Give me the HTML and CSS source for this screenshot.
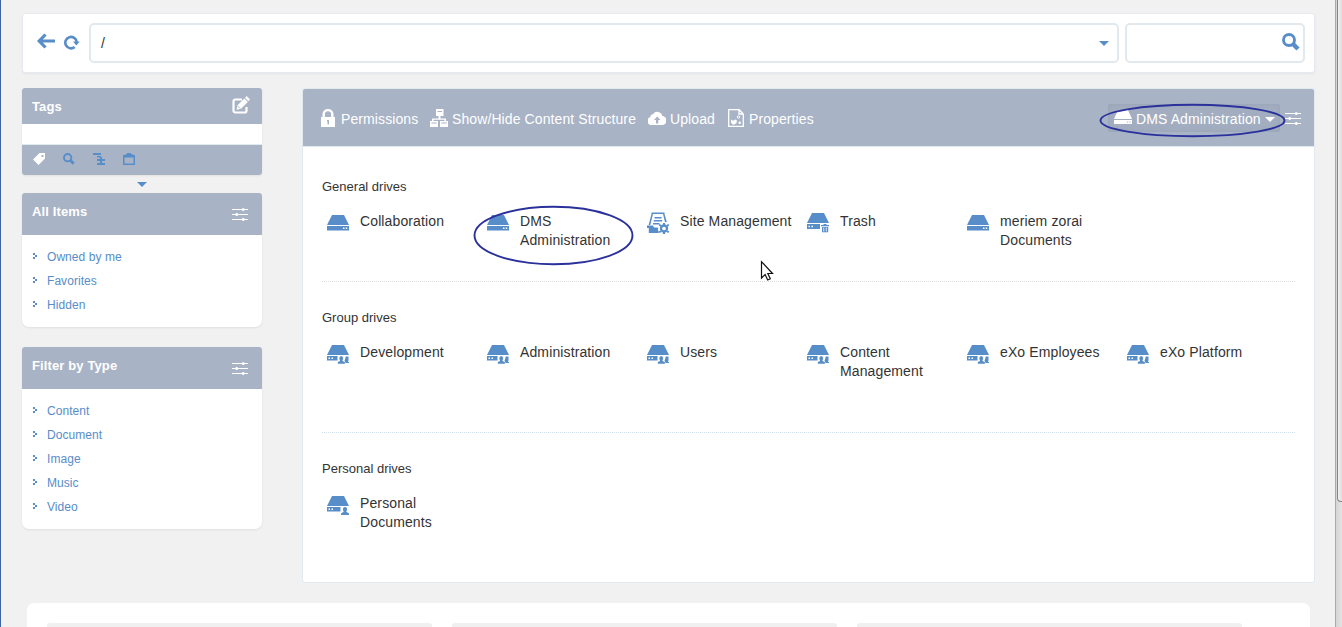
FILE: index.html
```html
<!DOCTYPE html>
<html lang="en">
<head>
<meta charset="utf-8">
<title>Drives</title>
<link rel="stylesheet" href="styles.css">
</head>
<body>
<svg class="defs" width="0" height="0">
  <defs>
    <symbol id="drive" viewBox="0 0 22 22"><path d="M5 3h12l5 10H0z"/><path fill-rule="evenodd" d="M0 14h22v4.500H0zM16 15.500v1.500h1.500v-1.500zM18.700 15.500v1.500h1.500v-1.500z"/></symbol>
    <symbol id="person" viewBox="0 0 8 8"><path d="M2 2.200C2 .7 2.700 0 4 0s2 .7 2 2.200c0 1.400-.6 2.100-.8 2.800 1 .6 2.800.5 2.800 2.100V8H0v-.9C0 5.500 1.800 5.600 2.800 5 2.600 4.300 2 3.600 2 2.200z"/></symbol>
    <symbol id="group" viewBox="0 0 22 22"><path d="M5 2h12l5 10H0z"/><path fill-rule="evenodd" d="M0 13h10.500v4.500H0zM1.500 14.500V16H3v-1.500zM4.500 14.500V16H6v-1.500z"/><use href="#person" x="10.500" y="13" width="7.500" height="8"/><path d="M18.800 13.500h2.700v3.500l-.5 1.500 1 .7V20h-3.500c0-1.100-.6-1.500-1.200-2 1.300-.8.800-3.500 1.500-4.500z"/></symbol>
    <symbol id="personal" viewBox="0 0 22 22"><path d="M5 2h12l5 10H0z"/><path fill-rule="evenodd" d="M0 13h13.500v4.500H0zM1.500 14.500V16H3v-1.500zM4.500 14.500V16H6v-1.500z"/><use href="#person" x="14" y="13" width="8" height="8"/></symbol>
    <symbol id="trash" viewBox="0 0 22 22"><path d="M5 1h12l5 10H0z"/><path fill-rule="evenodd" d="M0 12h13v5H0zM1.500 13.700v1.500H3v-1.500zM4.500 13.700v1.500H6v-1.500z"/><path fill-rule="evenodd" d="M14 13h2.500v-1h3v1H22v1.200h-8zM15 15h6.200v5.300H15zM16.400 15.500v4h.8v-4zM18.800 15.500v4h.8v-4z"/></symbol>
    <symbol id="site" viewBox="0 0 22 22"><path d="M4.500.5h13v1.500h-13zM4.500 2H6L3.300 13H1.600zM16 2h1.500l2.300 8-1.800.2zM7.500 5h7v1.400h-7zM6.700 8h8.500v1.400H6.700zM6 11h6.500v1.400H6zM0 13.500h6l1 2h3.500l.8 1-.5 1.500 1 1.500V21h-10v-5H0z"/><circle cx="17" cy="16.500" r="3" fill="none" stroke="currentColor" stroke-width="2.300"/><path d="M16 11h2v2h-2zM16 20h2v2h-2zM11.700 13.600l1-1.600 1.800 1-1 1.700zM19.500 13l1.800-1 1 1.600-1.800 1zM11.700 19.400l1.800-1 1 1.700-1.800 1zM20.500 18.400l1.800 1-1 1.700-1.800-1z"/></symbol>
    <symbol id="sliders" viewBox="0 0 16 14"><path d="M0 1.100h16v1H0zM0 6h16v1H0zM0 11h16v1H0z"/><path d="M10.300.2h2V3h-2zM3.700 5.100h2v2.800h-2zM10.300 10.100h2v2.800h-2z"/></symbol>
    <symbol id="search" viewBox="0 0 18 18"><circle cx="7" cy="7" r="5.500" fill="none" stroke="currentColor" stroke-width="2.900"/><path d="M11 11l5 5" stroke="currentColor" stroke-width="4.400"/></symbol>
    <symbol id="chevron" viewBox="0 0 4 6"><path d="M0 0h2v2H0zM2 2h2v2H2zM0 4h2v2H0z"/></symbol>
  </defs>
</svg>

<div class="page">
  <header class="address">
    <svg class="back" viewBox="0 0 18 16"><path d="M8.500 1.500L2.200 8l6.300 6.500M2.500 8H18" fill="none" stroke="currentColor" stroke-width="3.200"/></svg>
    <svg class="reload" viewBox="0 0 16 16"><path d="M10.700 13A5.700 5.700 0 1 1 12.700 8" fill="none" stroke="currentColor" stroke-width="2.600"/><path d="M9 7.500h6.700L12.300 11.500z"/></svg>
    <div class="field path"><span>/</span><i class="caret"></i></div>
    <div class="field query"><svg><use href="#search"/></svg></div>
  </header>

  <div class="columns">
    <aside>
      <section class="card tags">
        <h2>Tags<svg class="edit" viewBox="0 0 18 18"><path d="M10 3.500H3.200a1.700 1.700 0 0 0-1.700 1.700v9.600a1.700 1.700 0 0 0 1.700 1.700h9.600a1.700 1.700 0 0 0 1.700-1.700V11" fill="none" stroke="currentColor" stroke-width="2.200"/><path d="M4.500 13.800l1-4.500L12.300 2.500l3.500 3.500L9 12.800zM13 1.700L14.700 0 18 3.500l-1.600 1.700z"/><path d="M6 10.300l2 2" stroke="#a8b3c6"/></svg></h2>
        <div class="blank"></div>
        <div class="tabs">
          <svg class="on" viewBox="0 0 12 12"><path fill-rule="evenodd" d="M6.500 0H12v5.500L5.500 12 0 6.500zM8.500 2v2h2V2z"/></svg>
          <svg><use href="#search"/></svg>
          <svg viewBox="0 0 12 12"><path d="M0 0h8v2H0zM4 3h4v1h1v2h3v2H4V6h3V4.500H4zM7 8h2v2h3v2H4v-2h3z"/></svg>
          <svg viewBox="0 0 12 12"><path fill-rule="evenodd" d="M0 2h12v10H0zM1.500 4.500v6h9v-6z"/><path d="M4 0h4v1h1.500v2.300h-7V1H4z"/></svg>
        </div>
      </section>
      <div class="fold"><i class="caret"></i></div>
      <section class="card list">
        <h2>All Items<svg class="sliders"><use href="#sliders"/></svg></h2>
        <ul>
          <li><svg><use href="#chevron"/></svg>Owned by me</li>
          <li><svg><use href="#chevron"/></svg>Favorites</li>
          <li><svg><use href="#chevron"/></svg>Hidden</li>
        </ul>
      </section>
      <section class="card list">
        <h2>Filter by Type<svg class="sliders"><use href="#sliders"/></svg></h2>
        <ul>
          <li><svg><use href="#chevron"/></svg>Content</li>
          <li><svg><use href="#chevron"/></svg>Document</li>
          <li><svg><use href="#chevron"/></svg>Image</li>
          <li><svg><use href="#chevron"/></svg>Music</li>
          <li><svg><use href="#chevron"/></svg>Video</li>
        </ul>
      </section>
    </aside>

    <main>
      <nav>
        <a class="permissions"><svg viewBox="0 0 14 18"><path fill-rule="evenodd" d="M0 8h1.500V5a5.500 5 0 0 1 11 0v3H14v10H0zM3.900 8h6.200V5.300a3.100 3 0 0 0-6.200 0zM6 11v1.500h.5v3H8V11z"/></svg>Permissions</a>
        <a class="structure"><svg viewBox="0 0 18 18"><path fill-rule="evenodd" d="M6 0h7.500v7h-3v2.500H16V12h2v6h-8v-6h4.500v-1.200h-11V12H8v6H0v-6h2V9.500h6.500V7H6zM7.500 2v.9H12V2zM1.300 13.500v.9h5.400v-.9zM11.300 13.500v.9h5.400v-.9z"/></svg>Show/Hide Content Structure</a>
        <a class="upload"><svg viewBox="0 0 18 14"><path fill-rule="evenodd" d="M4 14A4 4 0 0 1 2.300 6.200 3 3 0 0 1 5 3.200 5 5 0 0 1 14.200 5 4.500 4.500 0 0 1 14 14zM8 12.500h2.300V9h2.200L9.200 5.500 6 9h2z"/></svg>Upload</a>
        <a class="properties"><svg viewBox="0 0 16 18"><path d="M.7.700h10.500L15.300 5v12.300H.7zM11 1v4h4" fill="none" stroke="currentColor" stroke-width="1.300"/><path d="M3 10.500l2 1.200 2.500-1.200 1.500 1-.5 2.500-2 1.500H4.500L3 13.500z"/><circle cx="10.500" cy="8" r="1.200" fill="none" stroke="currentColor"/><circle cx="11.700" cy="13.700" r="1.300"/></svg>Properties</a>
        <div class="current"><svg viewBox="0 0 18 14"><path d="M4 0h10l4 9H0z"/><path fill-rule="evenodd" d="M0 10h18v4H0zM13 11.500v1h1.200v-1zM15.300 11.500v1h1.200v-1z"/></svg>DMS Administration<i class="caret"></i></div>
        <svg class="sliders"><use href="#sliders"/></svg>
      </nav>
      <section class="drives general">
        <h3>General drives</h3>
        <div class="grid">
          <a><svg><use href="#drive"/></svg><span>Collaboration</span></a>
          <a><svg><use href="#drive"/></svg><span>DMS Administration</span></a>
          <a><svg><use href="#site"/></svg><span>Site Management</span></a>
          <a><svg><use href="#trash"/></svg><span>Trash</span></a>
          <a><svg><use href="#drive"/></svg><span>meriem zorai Documents</span></a>
        </div>
      </section>
      <section class="drives groups">
        <h3>Group drives</h3>
        <div class="grid">
          <a><svg><use href="#group"/></svg><span>Development</span></a>
          <a><svg><use href="#group"/></svg><span>Administration</span></a>
          <a><svg><use href="#group"/></svg><span>Users</span></a>
          <a><svg><use href="#group"/></svg><span>Content Management</span></a>
          <a><svg><use href="#group"/></svg><span>eXo Employees</span></a>
          <a><svg><use href="#group"/></svg><span>eXo Platform</span></a>
        </div>
      </section>
      <section class="drives">
        <h3>Personal drives</h3>
        <div class="grid">
          <a><svg><use href="#personal"/></svg><span>Personal Documents</span></a>
        </div>
      </section>
    </main>
  </div>

  <footer><div></div><div></div><div></div></footer>
</div>
<div class="scrollbar"><div class="thumb"></div></div>

<svg class="overlay" viewBox="0 0 1342 627">
  <g fill="none" stroke="#2b319b" stroke-width="1.900">
    <ellipse cx="553.500" cy="235.500" rx="79" ry="28.700"/>
    <ellipse cx="1192.500" cy="120.500" rx="92" ry="15.700"/>
  </g>
  <path d="M761.500 261.700v16.300l3.600-3.400 2.600 5.400 2.600-1.200-2.500-5.300h4.700z" fill="#fff" stroke="#111" stroke-width="1.200"/>
</svg>
</body>
</html>
```
FILE: styles.css
```css
* { box-sizing: border-box; }
body {
  display: flex;
  height: 627px;
  margin: 0;
  overflow: hidden;
  background: #f1f1f1;
  border-left: 1px solid #41659f;
  font: 14px/19px "Liberation Sans", Arial, sans-serif;
  color: #333;
}
svg { display: block; flex: none; fill: currentColor; }
.defs { position: absolute; }
.page { flex: 1; height: 627px; padding: 13px 20px 0 21px; }

.caret {
  border: 5px solid transparent;
  border-top-color: #578dc9;
  border-bottom: 0;
}

.address {
  display: flex;
  align-items: center;
  width: 1293px;
  height: 60px;
  padding: 0 9px 0 14px;
  background: #fff;
  border: 1px solid #e6eaef;
  border-radius: 3px;
  box-shadow: 0 1px 2px #e2e4e7;
  color: #578dc9;
}
.back { width: 18px; height: 16px; margin-bottom: 4px; }
.reload { width: 16px; height: 16px; margin: 0 0 2px 9px; }
.field {
  display: flex;
  align-items: center;
  justify-content: space-between;
  height: 40px;
  border: 2px solid #e1e8ee;
  border-radius: 5px;
}
.path { width: 1030px; margin-left: 9px; padding: 0 8px 0 10px; color: #333; }
.query { width: 180px; margin-left: 6px; padding: 0 3px; justify-content: flex-end; }
.query svg { width: 18px; height: 18px; margin-bottom: 2px; }
.path, .query { flex: none; }

.columns { display: flex; gap: 40px; margin-top: 15px; }
aside { width: 240px; }
.card {
  background: #fff;
  border-radius: 3px 3px 7px 7px;
  box-shadow: 0 1px 2px #e0e0e0;
  overflow: hidden;
}
h2 {
  display: flex;
  justify-content: space-between;
  height: 42px;
  margin: 0;
  padding: 9px 14px 0 10px;
  background: #a8b3c6;
  color: #fff;
  font-size: 13px;
  line-height: 20px;
  letter-spacing: .12px;
}
.sliders { width: 16px; height: 14px; }
h2 .sliders { margin-top: 6px; }
.tags { height: 87px; border-radius: 3px; }
.tags h2 { height: 36px; padding-right: 12px; }
.edit { width: 18px; height: 18px; margin-top: -1px; }
.blank { height: 21px; border-bottom: 1px solid #e1e8ee; }
.tabs {
  display: flex;
  gap: 18px;
  height: 30px;
  padding: 8px 11px;
  background: #a8b3c6;
  color: #578dc9;
}
.tabs svg { width: 12px; height: 12px; }
.tabs .on { color: #fff; }
.fold { display: flex; height: 18px; padding: 7px 0 0 115px; }
.list + .list { margin-top: 20px; }
ul {
  margin: 0;
  padding: 10px 11px;
  list-style: none;
  color: #578dc9;
  font-size: 12px;
  line-height: 24px;
  letter-spacing: .06px;
}
li { display: flex; }
li svg { width: 4px; height: 6px; margin: 8px 10px 0 0; }

main {
  width: 1013px;
  height: 495px;
  background: #fff;
  border: 1px solid #e1e8ee;
  border-radius: 3px;
  overflow: hidden;
}
nav {
  display: flex;
  align-items: center;
  height: 58px;
  padding: 3px 13px 0 18px;
  background: #a8b3c6;
  border-bottom: 1px solid #e1e8ee;
  color: #fff;
}
nav a { display: flex; align-items: center; white-space: nowrap; letter-spacing: .1px; }
nav a svg { position: relative; top: -1px; }
.permissions { width: 109px; }
.permissions svg { width: 14px; height: 18px; margin-right: 6px; }
.structure { width: 218px; }
.structure svg { width: 18px; height: 18px; margin-right: 4px; }
.upload { width: 80px; }
.upload svg { width: 18px; height: 14px; margin-right: 4px; }
.properties svg { width: 16px; height: 18px; margin-right: 5px; }
.current {
  display: flex;
  align-items: center;
  width: 172px;
  height: 28px;
  margin: 0 5px 3px auto;
  padding: 3px 5px 0 6px;
  background: #a2adc0;
  border-radius: 3px;
  box-shadow: inset 0 0 5px #96a1b4;
  white-space: nowrap;
  letter-spacing: .1px;
}
.current svg { width: 18px; height: 14px; margin: 0 4px 4px 0; }
.current .caret { margin-left: auto; border-top-color: #fff; }

.drives { margin: 0 19px; padding-top: 26px; }
.general { height: 135px; padding-top: 30px; border-bottom: 1px dotted #dcdcdc; }
.groups { height: 151px; border-bottom: 1px dotted #cfdde8; }
h3 { margin: 0; font-size: 13px; font-weight: 400; line-height: 20px; }
.grid { display: grid; grid-template-columns: repeat(6, 160px); margin-top: 15px; letter-spacing: .12px; }
.grid a { display: flex; padding-left: 5px; }
.grid svg { width: 22px; height: 22px; margin-right: 11px; color: #578dc9; }
.grid span { width: 118px; }

footer {
  display: flex;
  gap: 20px;
  width: 1283px;
  height: 24px;
  margin: 20px 0 0 5px;
  padding: 20px 20px 0;
  background: #fff;
  border-radius: 7px 7px 0 0;
}
footer div { width: 385px; background: #f0f0f0; border-radius: 3px 3px 0 0; }

.scrollbar {
  width: 7px;
  height: 627px;
  padding-left: 1px;
  background: linear-gradient(90deg, #d5d5d5, #e3e3e3);
  border-left: 1px solid #aaa;
}
.thumb {
  height: 502px;
  background: linear-gradient(90deg, #f2f2f2, #ddd);
  border: solid #858585;
  border-width: 0 0 1px 1px;
  border-radius: 0 0 0 4px;
}
.overlay { position: absolute; top: 0; left: 0; width: 1342px; height: 627px; pointer-events: none; }
```
